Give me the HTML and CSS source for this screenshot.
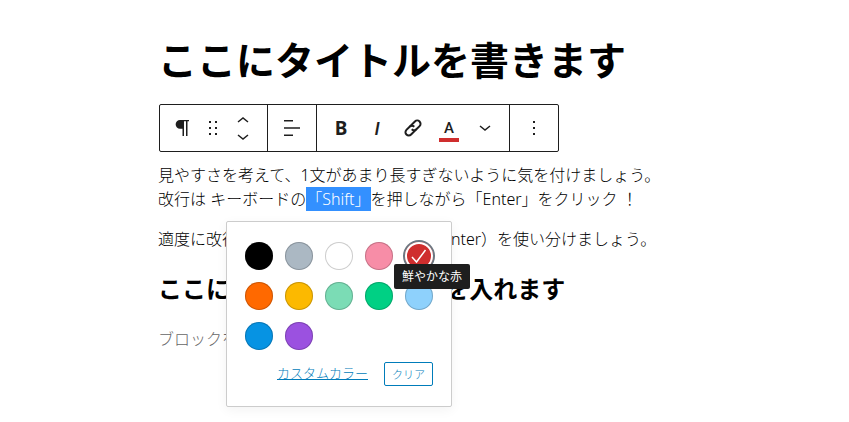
FILE: index.html
```html
<!DOCTYPE html>
<html lang="ja">
<head>
  <meta charset="UTF-8">
  <title>投稿を編集</title>
  <meta name="viewport" content="width=device-width, initial-scale=1.0">
  <link rel="stylesheet" href="styles.css">
</head>
<body>

  <main class="editor">
    <h1 class="post-title">ここにタイトルを書きます</h1>

    <div class="toolbar" role="toolbar" aria-label="ブロックツール">
      <div class="toolbar-group">
        <button class="tool tool-type" aria-label="段落">
          <svg width="24" height="24" viewBox="0 0 24 24"><path d="M19 4v1.200h-1.500V20H16V5.200h-2V20h-1.500v-7.300H10a4.350 4.350 0 0 1 0-8.700z"/></svg>
        </button>
        <button class="tool tool-drag" aria-label="ドラッグ">
          <svg width="18" height="24" viewBox="0 0 18 24"><path d="M5 5h2v2H5zM5 11h2v2H5zM5 17h2v2H5zM11 5h2v2h-2zM11 11h2v2h-2zM11 17h2v2h-2z"/></svg>
        </button>
        <div class="movers">
          <button class="tool mover" aria-label="上に移動">
            <svg width="12" height="8" viewBox="0 0 12 8"><path class="line" d="M1 6l5-4 5 4"/></svg>
          </button>
          <button class="tool mover" aria-label="下に移動">
            <svg width="12" height="8" viewBox="0 0 12 8"><path class="line" d="M1 2l5 4 5-4"/></svg>
          </button>
        </div>
      </div>
      <div class="toolbar-group toolbar-single">
        <button class="tool" aria-label="配置">
          <svg width="24" height="24" viewBox="0 0 24 24"><path d="M4 4h9v1.500H4zM4 11.300h16v1.500H4zM4 18.500h9V20H4z"/></svg>
        </button>
      </div>
      <div class="toolbar-group toolbar-format">
        <button class="tool letter-bold" aria-label="太字">B</button>
        <button class="tool letter-italic" aria-label="イタリック">I</button>
        <button class="tool" aria-label="リンク">
          <svg width="24" height="24" viewBox="0 0 24 24">
            <g class="link-icon" transform="rotate(-45 12 12)">
              <path d="M13 15.300H6a3.300 3.300 0 0 1 0-6.600h4.500a3.300 3.300 0 0 1 3.300 3.300"/>
              <path d="M11 8.700h7a3.300 3.300 0 0 1 0 6.600h-4.500a3.300 3.300 0 0 1-3.300-3.300"/>
            </g>
          </svg>
        </button>
        <button class="tool letter-color" aria-label="文字色"><span>A</span></button>
        <button class="tool" aria-label="さらに表示">
          <svg width="12" height="8" viewBox="0 0 12 8"><path class="line" d="M1 2l5 4 5-4"/></svg>
        </button>
      </div>
      <div class="toolbar-group toolbar-single">
        <button class="tool" aria-label="詳細設定">
          <svg width="24" height="24" viewBox="0 0 24 24"><path d="M11 5h2v2h-2zM11 11h2v2h-2zM11 17h2v2h-2z"/></svg>
        </button>
      </div>
    </div>

    <div class="block-selected">
      <p>見やすさを考えて、1文があまり長すぎないように気を付けましょう。<br>改行は キーボードの<mark>「Shift」</mark>を押しながら「Enter」をクリック ！</p>

      <div class="popover">
        <div class="swatches">
          <button class="swatch black" aria-label="黒"></button>
          <button class="swatch gray" aria-label="グレー"></button>
          <button class="swatch white" aria-label="白"></button>
          <button class="swatch pink" aria-label="ピンク"></button>
          <button class="swatch red active" aria-label="鮮やかな赤">
            <svg width="24" height="24" viewBox="0 0 24 24"><path d="M5 13l4.500 5L18.500 6"/></svg>
            <span class="tooltip">鮮やかな赤</span>
          </button>
          <button class="swatch orange" aria-label="オレンジ"></button>
          <button class="swatch amber" aria-label="琥珀"></button>
          <button class="swatch mint" aria-label="薄い緑"></button>
          <button class="swatch green" aria-label="緑"></button>
          <button class="swatch sky" aria-label="薄い青"></button>
          <button class="swatch blue" aria-label="青"></button>
          <button class="swatch purple" aria-label="紫"></button>
        </div>
        <div class="popover-actions">
          <button class="custom-color">カスタムカラー</button>
          <button class="clear">クリア</button>
        </div>
      </div>
    </div>

    <p>適度に改行（ Shift ＋ Enter ）と段落（ Enter）を使い分けましょう。</p>
    <h2>ここに見出しのテキスト文を入れます</h2>
    <p class="placeholder">ブロックを選択</p>
  </main>

</body>
</html>
```
FILE: styles.css
```css
body {
  margin: 0;
  background: #fff;
  color: #000;
  font-family: "Noto Sans", "Noto Sans CJK JP", sans-serif;
  font-size: 16px;
  line-height: 24px;
}
button {
  font-family: inherit;
  padding: 0;
  border: none;
  background: none;
  cursor: pointer;
}
.editor {
  box-sizing: border-box;
  max-width: 533px;
  min-height: 100vh;
  margin: 0 auto;
  padding: 32px 0 16px;
}
.post-title {
  margin: 0 0 16px;
  font-size: 39px;
  line-height: 56px;
}
p {
  margin: 0 0 16px;
  font-weight: 300;
}
h2 {
  margin: 0 0 20px;
  padding-top: 4px;
  font-size: 24px;
  line-height: 36px;
}
mark {
  padding: 1px 0;
  background: #3390ff;
  color: #fff;
}
.placeholder {
  color: #666;
}

/* toolbar */
.toolbar {
  display: flex;
  width: fit-content;
  margin: 0 0 11px 1px;
  border: 1px solid #1e1e1e;
  border-radius: 2px;
}
.toolbar-group {
  display: flex;
  height: 46px;
  padding-right: 3px;
  border-right: 1px solid #1e1e1e;
}
.toolbar-group:last-child {
  border-right: none;
}
.toolbar-single {
  padding: 0 6px;
}
.toolbar-format {
  padding: 0 6px;
}
.tool {
  display: flex;
  align-items: center;
  justify-content: center;
  width: 36px;
  color: #1e1e1e;
}
.tool svg {
  fill: currentColor;
}
.tool-type {
  width: 44px;
}
.tool-drag {
  width: 18px;
}
.movers {
  display: flex;
  flex-direction: column;
  justify-content: center;
}
.mover {
  width: 42px;
  height: 17px;
}
.tool .line {
  fill: none;
  stroke: currentColor;
  stroke-width: 1.5;
}
.link-icon {
  fill: none;
  stroke: currentColor;
  stroke-width: 2;
}
.letter-bold {
  font-size: 19px;
  font-weight: 700;
}
.letter-italic {
  font-family: Roboto, sans-serif;
  font-size: 19px;
  font-style: italic;
  font-weight: 500;
}
.letter-color span {
  width: 20px;
  border-bottom: 4px solid #cf2e2e;
  padding-top: 4px;
  font-family: Roboto, sans-serif;
  font-size: 15px;
  font-weight: 500;
  line-height: 20px;
}

/* colour popover, centred under the selected text */
.block-selected {
  position: relative;
}
.popover {
  position: absolute;
  top: 58px;
  left: 68px;
  z-index: 10;
  box-sizing: border-box;
  width: 226px;
  padding: 20px 18px;
  border: 1px solid #ccc;
  border-radius: 2px;
  background: #fff;
  box-shadow: 0 3px 12px rgba(0,0,0,0.05);
}
.swatches {
  display: grid;
  grid-template-columns: repeat(5, 28px);
  gap: 12px;
}
.swatch {
  width: 28px;
  height: 28px;
  border-radius: 50%;
  box-shadow: inset 0 0 0 1px rgba(0,0,0,0.2);
}
.black { background: #000; }
.gray { background: #abb8c3; }
.white { background: #fff; }
.pink { background: #f78da7; }
.red { background: #cf2e2e; }
.orange { background: #ff6900; }
.amber { background: #fcb900; }
.mint { background: #7bdcb5; }
.green { background: #00d084; }
.sky { background: #8ed1fc; }
.blue { background: #0693e3; }
.purple { background: #9b51e0; }
.swatch.active {
  position: relative;
  display: flex;
  align-items: center;
  justify-content: center;
  box-shadow: inset 0 0 0 2px #fff, 0 0 0 2px #6c7781;
}
.swatch svg {
  fill: none;
  stroke: #fff;
  stroke-width: 1.5;
}
.tooltip {
  position: absolute;
  top: 22px;
  left: -11px;
  z-index: 1;
  padding: 0 8px;
  border-radius: 2px;
  background: #1e1e1e;
  color: #fff;
  font-size: 12px;
  line-height: 25px;
  white-space: nowrap;
}
.popover-actions {
  display: flex;
  align-items: flex-start;
  justify-content: flex-end;
  gap: 16px;
  margin-top: 12px;
}
.custom-color {
  color: #007cba;
  font-size: 13px;
  font-weight: 300;
  line-height: 22px;
  text-decoration: underline;
}
.clear {
  height: 24px;
  padding: 0 7px;
  border: 1px solid #007cba;
  border-radius: 2px;
  color: #007cba;
  font-size: 11px;
  font-weight: 300;
}
```
